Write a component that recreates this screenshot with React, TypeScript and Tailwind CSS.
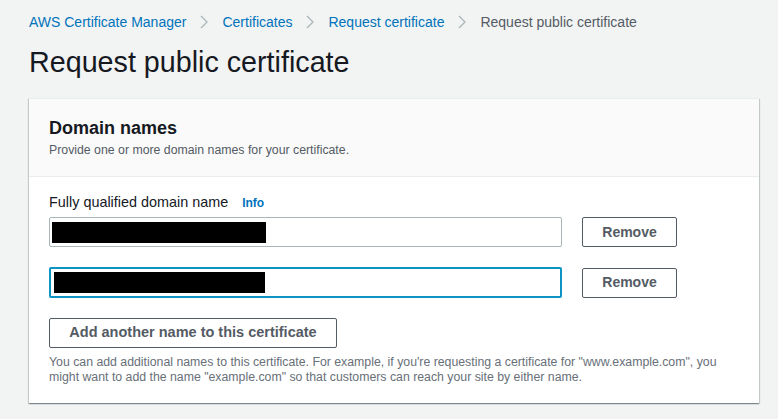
const font = { fontFamily: '"Liberation Sans", Arial, sans-serif' };

function Chevron() {
  return (
    <svg width="8" height="14" viewBox="0 0 8 14" className="mx-[14px] shrink-0">
      <polyline points="1,1 7,7 1,13" fill="none" stroke="#aab7b8" strokeWidth="1.3" />
    </svg>
  );
}

function DomainRow({ focused, barWidth, barOffset }: { focused?: boolean; barWidth: number; barOffset: number }) {
  return (
    <div className="flex items-center gap-5">
      <div
        className={
          focused
            ? "w-[513px] h-[31px] rounded-[2px] border-2 border-[#0d93c4] bg-white flex items-center"
            : "w-[513px] h-[30px] rounded-[2px] border border-[#aab7b8] bg-white flex items-center"
        }
      >
        <div className="h-[21px] bg-black" style={{ width: barWidth, marginLeft: barOffset }} />
      </div>
      <button className="w-[95px] h-[30px] rounded-[2px] border border-[#545b64] bg-white text-[14px] font-bold text-[#545b64]">
        Remove
      </button>
    </div>
  );
}

export default function App() {
  return (
    <div className="min-h-[419px] w-[778px] bg-[#f2f3f3] pl-[29px] pt-[14px] text-[#16191f]" style={font}>
      {/* Breadcrumbs */}
      <nav className="flex items-center h-[16px] text-[14px] leading-[16px]">
        <span className="text-[#0073bb]">AWS Certificate Manager</span>
        <Chevron />
        <span className="text-[#0073bb]">Certificates</span>
        <Chevron />
        <span className="text-[#0073bb]">Request certificate</span>
        <Chevron />
        <span className="text-[#545b64]">Request public certificate</span>
      </nav>

      <h1 className="mt-[16px] text-[28.7px] leading-[32px] font-normal">Request public certificate</h1>

      {/* Card */}
      <div className="mt-[20px] w-[730px] bg-white border-t border-[#eaeded] shadow-[0_1px_1px_0_rgba(0,28,36,0.3),1px_1px_1px_0_rgba(0,28,36,0.15),-1px_1px_1px_0_rgba(0,28,36,0.15)]">
        <div className="bg-[#fafafa] border-b border-[#eaeded] px-5 pt-[18px] pb-[18px]">
          <h2 className="text-[18px] leading-[22px] font-bold">Domain names</h2>
          <p className="text-[12.3px] leading-[16px] text-[#545b64] mt-[3px]">
            Provide one or more domain names for your certificate.
          </p>
        </div>

        <div className="px-5 pt-[15px] pb-[18px]">
          <div className="flex items-baseline h-[20px] leading-[20px]">
            <span className="text-[14.4px]">Fully qualified domain name</span>
            <span className="ml-[14px] text-[12px] font-bold text-[#0073bb]">Info</span>
          </div>

          <div className="mt-[5px] flex flex-col gap-5">
            <DomainRow barWidth={214} barOffset={2} />
            <DomainRow focused barWidth={211} barOffset={3} />
          </div>

          <button className="mt-[20px] w-[288px] h-[30px] rounded-[2px] border border-[#545b64] bg-white text-[14.5px] font-bold text-[#545b64]">
            Add another name to this certificate
          </button>

          <p className="mt-[7px] text-[12.3px] leading-[15px] text-[#687078]">
            You can add additional names to this certificate. For example, if you're requesting a certificate for "www.example.com", you
            <br />
            might want to add the name "example.com" so that customers can reach your site by either name.
          </p>
        </div>
      </div>
    </div>
  );
}
